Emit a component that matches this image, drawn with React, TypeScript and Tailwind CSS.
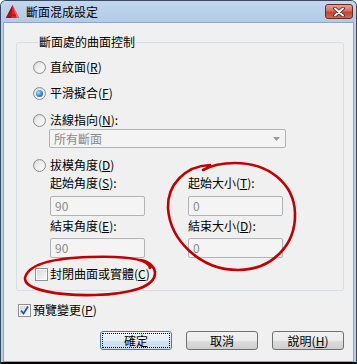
import React from "react";

function Acc({ k }: { k: string }) {
  return (
    <span>
      (<span className="underline">{k}</span>)
    </span>
  );
}

function Radio({ checked }: { checked?: boolean }) {
  return (
    <span className="flex h-[13px] w-[13px] shrink-0 items-center justify-center rounded-full border border-[#8e8f8f] bg-[linear-gradient(135deg,#d4d4d4,#f7f7f7)]">
      <span className="flex h-[9px] w-[9px] items-center justify-center rounded-full bg-[linear-gradient(135deg,#e2e2e2,#fdfdfd)]">
        {checked && (
          <span className="h-[7px] w-[7px] rounded-full bg-[radial-gradient(circle_at_35%_35%,#a8e4ff,#2a8ad4_55%,#0d4a86)]" />
        )}
      </span>
    </span>
  );
}

function Check({ checked }: { checked?: boolean }) {
  return (
    <span className="flex h-[13px] w-[13px] shrink-0 items-center justify-center border border-[#8e8f8f] bg-white">
      <span className="relative h-[9px] w-[9px] bg-[linear-gradient(135deg,#d8d8d8,#f9f9f9)]">
        {checked && (
          <svg viewBox="0 0 9 9" className="absolute inset-0 h-[9px] w-[9px]">
            <path d="M1 4.5 L3.5 7.5 L8 0.5" fill="none" stroke="#2a56a8" strokeWidth="1.8" />
          </svg>
        )}
      </span>
    </span>
  );
}

function Field({ value, w }: { value: string; w: string }) {
  return (
    <div
      className={`${w} flex h-[20px] items-center rounded-[2px] border border-[#b0b4b7] bg-[#f4f4f4] pl-[4px] text-[12px] leading-[16px] text-[#8a8a8a]`}
    >
      {value}
    </div>
  );
}

function Button({ children, primary }: { children: React.ReactNode; primary?: boolean }) {
  if (primary) {
    return (
      <button className="flex h-[19px] w-[72px] items-center justify-center rounded-[3px] border border-[#3c7fb1] bg-[linear-gradient(#eef5fb_0%,#e3eef7_50%,#d4e4f0_51%,#cadceb_100%)] p-[1px]">
        <span className="flex h-full w-full items-center justify-center border border-dotted border-black text-[12px] leading-[14px] text-black">
          {children}
        </span>
      </button>
    );
  }
  return (
    <button className="flex h-[19px] w-[72px] items-center justify-center rounded-[3px] border border-[#707070] bg-[linear-gradient(#f2f2f2_0%,#ebebeb_50%,#dddddd_51%,#cfcfcf_100%)] text-[12px] leading-[14px] text-black">
      {children}
    </button>
  );
}

function AcadIcon() {
  return (
    <svg viewBox="0 0 16 16" className="h-[15px] w-[15px]">
      <path d="M1 15 L8 1 L15 15 Z" fill="#e0262a" />
      <path d="M1 15 L8 1 L6.5 15 Z" fill="#9c1216" />
      <path d="M8 1 L15 15 L12.5 15 Z" fill="#f46a5a" />
      <path d="M5 11 L11 11 L12 13 L4 13 Z" fill="#b51a1e" />
    </svg>
  );
}

function CloseButton() {
  return (
    <div className="flex h-[15px] w-[28px] items-center justify-center rounded-[3px] border border-[#6b2a22] bg-[linear-gradient(#e6a193_0%,#d5705f_45%,#c14434_55%,#cf6a4c_100%)]">
      <svg viewBox="0 0 14 10" className="h-[10px] w-[14px]">
        <path d="M3 1.5 L11 8.5 M11 1.5 L3 8.5" stroke="#4a1f1a" strokeWidth="3.6" strokeLinecap="round" />
        <path d="M3 1.5 L11 8.5 M11 1.5 L3 8.5" stroke="#ffffff" strokeWidth="2" strokeLinecap="round" />
      </svg>
    </div>
  );
}

export default function App() {
  return (
    <div className="relative h-[364px] w-[357px] overflow-hidden bg-white font-['Noto_Sans_CJK_TC','Noto_Sans_CJK_SC',sans-serif] text-black">
      <div className="flex h-full flex-col rounded-t-[6px] border border-b-2 border-[#3a4b60] border-b-black bg-[#b8cfea]">
        {/* title bar */}
        <div className="flex h-[21px] items-center rounded-t-[5px] bg-[linear-gradient(#c2d7ef,#b2cae8)] pl-[4px] pr-[3px]">
          <AcadIcon />
          <span className="ml-[6px] text-[12px] leading-[14px] text-black">斷面混成設定</span>
          <div className="ml-auto">
            <CloseButton />
          </div>
        </div>

        {/* client area */}
        <div className="mx-[2px] mb-0 flex flex-1 flex-col border border-[#8ea6c4] border-b-[#4fbde4] bg-[#f0f0f0] pl-[12px] pr-[9px] pt-[12px] text-[12px] leading-[16px]">
          <fieldset className="rounded-[3px] border border-[#d5dfe5] pb-[8px] pl-[16px]">
            <legend className="ml-[5px] px-[1px] text-[12px] leading-[14px]">斷面處的曲面控制</legend>

            <div className="mt-[10px] flex h-[16px] items-center gap-[4px]">
              <Radio />
              <span>
                直紋面<Acc k="R" />
              </span>
            </div>
            <div className="mt-[10px] flex h-[16px] items-center gap-[4px]">
              <Radio checked />
              <span>
                平滑擬合<Acc k="F" />
              </span>
            </div>
            <div className="mt-[11px] flex h-[16px] items-center gap-[4px]">
              <Radio />
              <span>
                法線指向<Acc k="N" />:
              </span>
            </div>
            <div className="ml-[16px] mt-[1px] flex h-[19px] w-[237px] items-center justify-between rounded-[2px] border border-[#b0b4b7] bg-[#f4f4f4] pl-[4px] pr-[5px] text-[#8a8a8a]">
              <span>所有斷面</span>
              <svg viewBox="0 0 7 4" className="h-[4px] w-[7px]">
                <path d="M0 0 L7 0 L3.5 4 Z" fill="#9a9a9a" />
              </svg>
            </div>
            <div className="mt-[9px] flex h-[16px] items-center gap-[4px]">
              <Radio />
              <span>
                拔模角度<Acc k="D" />
              </span>
            </div>

            <div className="ml-[17px] mt-[2px] flex gap-[43px]">
              <div className="flex flex-col">
                <span className="h-[16px]">
                  起始角度<Acc k="S" />:
                </span>
                <div className="mt-[5px]">
                  <Field value="90" w="w-[95px]" />
                </div>
                <span className="mt-[2px] h-[16px]">
                  結束角度<Acc k="E" />:
                </span>
                <div className="mt-[4px]">
                  <Field value="90" w="w-[95px]" />
                </div>
              </div>
              <div className="flex flex-col">
                <span className="h-[16px]">
                  起始大小<Acc k="T" />:
                </span>
                <div className="mt-[5px]">
                  <Field value="0" w="w-[95px]" />
                </div>
                <span className="mt-[2px] h-[16px]">
                  結束大小<Acc k="D" />:
                </span>
                <div className="mt-[4px]">
                  <Field value="0" w="w-[95px]" />
                </div>
              </div>
            </div>

            <div className="ml-[2px] mt-[8px] flex h-[16px] items-center gap-[2px]">
              <Check />
              <span>
                封閉曲面或實體<Acc k="C" />
              </span>
            </div>
          </fieldset>

          <div className="ml-[2px] mt-[11px] flex h-[16px] items-center gap-[2px]">
            <Check checked />
            <span>
              預覽變更<Acc k="P" />
            </span>
          </div>

          <div className="mt-[13px] flex justify-end gap-[14px]">
            <Button primary>確定</Button>
            <Button>取消</Button>
            <Button>
              說明<Acc k="H" />
            </Button>
          </div>
        </div>
      </div>

      {/* red hand-drawn marks */}
      <svg className="pointer-events-none absolute inset-0" width="357" height="364" viewBox="0 0 357 364">
        <path
          d="M 210 165 C 185 166, 167 185, 168 208 C 170 240, 200 270, 238 270 C 272 270, 296 245, 295 213 C 294 183, 268 163, 235 163 C 222 163, 212 165, 203 170"
          fill="none"
          stroke="#c00000"
          strokeWidth="2.6"
          strokeLinecap="round"
        />
        <path
          d="M 150 268 C 148 258, 120 256, 90 257 C 55 258, 28 264, 25 278 C 24 290, 60 296, 95 295 C 130 294, 156 287, 155 272 C 154 266, 148 261, 140 260"
          fill="none"
          stroke="#c00000"
          strokeWidth="2.6"
          strokeLinecap="round"
        />
      </svg>
    </div>
  );
}
